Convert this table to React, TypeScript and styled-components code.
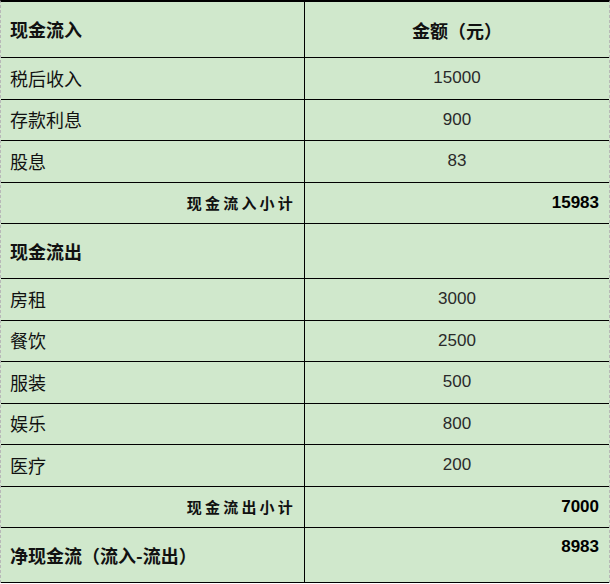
import React from "react";
import styled, { createGlobalStyle } from "styled-components";

type RowKind = "head" | "item" | "subtotal" | "section" | "total";

interface Line {
  kind: RowKind;
  label: string;
  value?: string;
}

const lines: Line[] = [
  { kind: "head", label: "现金流入", value: "金额（元）" },
  { kind: "item", label: "税后收入", value: "15000" },
  { kind: "item", label: "存款利息", value: "900" },
  { kind: "item", label: "股息", value: "83" },
  { kind: "subtotal", label: "现金流入小计", value: "15983" },
  { kind: "section", label: "现金流出" },
  { kind: "item", label: "房租", value: "3000" },
  { kind: "item", label: "餐饮", value: "2500" },
  { kind: "item", label: "服装", value: "500" },
  { kind: "item", label: "娱乐", value: "800" },
  { kind: "item", label: "医疗", value: "200" },
  { kind: "subtotal", label: "现金流出小计", value: "7000" },
  { kind: "total", label: "净现金流（流入-流出）", value: "8983" },
];

const rowHeights: Record<RowKind, string> = {
  head: "56px",
  item: "41.5px",
  subtotal: "41.5px",
  section: "55px",
  total: "55px",
};

const App = () => {
  return (
    <>
      <GlobalStyle />
      <Sheet>
        {lines.map((line, i) => (
          <Row key={i} $kind={line.kind}>
            <LabelCell $kind={line.kind}>{line.label}</LabelCell>
            <ValueCell $kind={line.kind}>{line.value}</ValueCell>
          </Row>
        ))}
      </Sheet>
    </>
  );
};

const GlobalStyle = createGlobalStyle`
  html, body {
    margin: 0;
    padding: 0;
    background: #ffffff;
  }
  body {
    font-family: "Noto Sans CJK SC", "Liberation Sans", sans-serif;
  }
`;

const Sheet = styled.div`
  width: 610px;
  box-sizing: border-box;
  background: #d0e8cc;
  border-top: 2px solid #000;
  border-left: 1px dashed #b8b8b8;
  border-right: 1px dashed #b8b8b8;
`;

const Row = styled.div<{ $kind: RowKind }>`
  display: grid;
  grid-template-columns: 304px 1fr;
  height: ${(p) => rowHeights[p.$kind]};
  box-sizing: border-box;
  border-bottom: 1px solid #000;
`;

const LabelCell = styled.div<{ $kind: RowKind }>`
  display: flex;
  align-items: center;
  box-sizing: border-box;
  border-right: 1px solid #000;
  color: #111;
  font-family: "Noto Sans CJK SC", sans-serif;
  ${(p) =>
    p.$kind === "subtotal"
      ? `
    justify-content: flex-end;
    padding-right: 8px;
    font-size: 15px;
    font-weight: 700;
    letter-spacing: 3.2px;
  `
      : `
    padding-left: 9px;
    padding-bottom: 1px;
    font-size: 18px;
    font-weight: ${p.$kind === "item" ? 400 : 700};
  `}
`;

const ValueCell = styled.div<{ $kind: RowKind }>`
  display: flex;
  box-sizing: border-box;
  color: #1a1a1a;
  font-family: "Liberation Sans", Arial, sans-serif;
  font-size: 17px;
  ${(p) => {
    switch (p.$kind) {
      case "head":
        return `
          align-items: center;
          justify-content: center;
          font-family: "Noto Sans CJK SC", sans-serif;
          font-size: 18px;
          font-weight: 700;
          color: #111;
        `;
      case "item":
        return `
          align-items: center;
          justify-content: center;
          color: #2a2a2a;
        `;
      case "subtotal":
        return `
          align-items: center;
          justify-content: flex-end;
          padding-right: 10px;
          font-weight: 700;
          color: #000;
        `;
      case "total":
        return `
          align-items: flex-start;
          justify-content: flex-end;
          padding-top: 9px;
          padding-right: 10px;
          font-weight: 700;
          color: #000;
        `;
      default:
        return "";
    }
  }}
`;

export default App;
